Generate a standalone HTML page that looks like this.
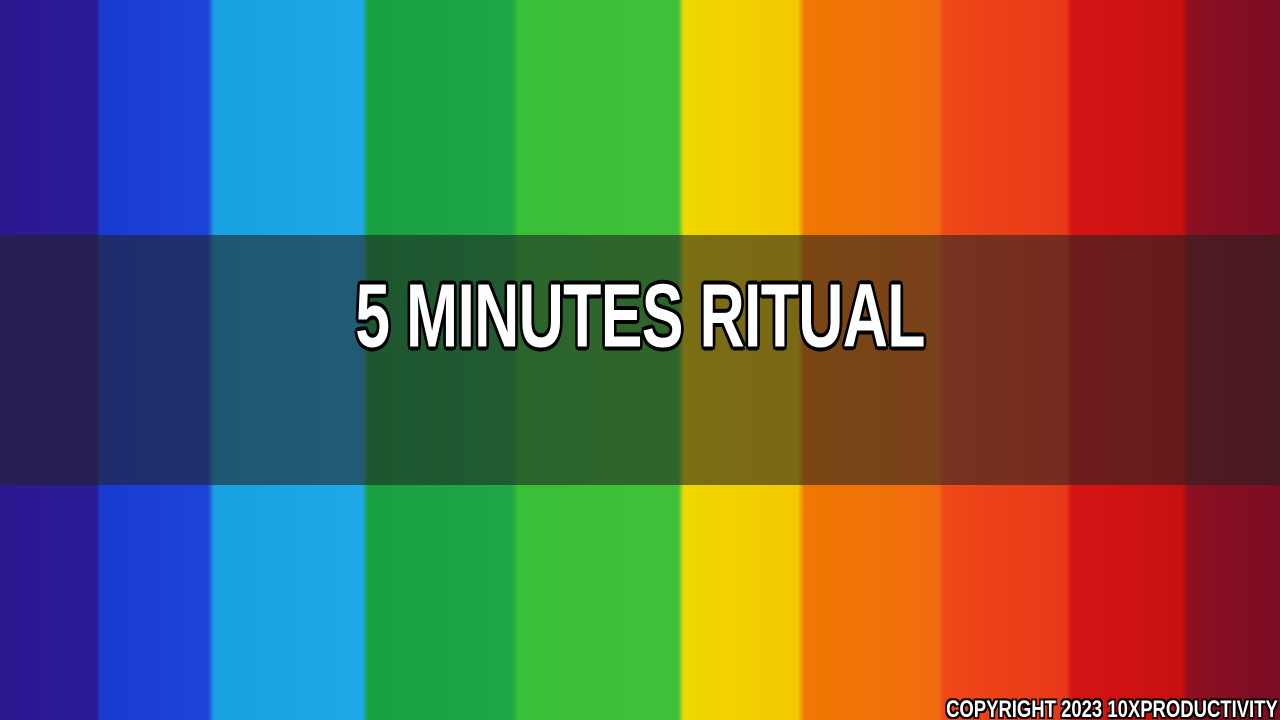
<!DOCTYPE html>
<html><head><style>
html,body{margin:0;padding:0;width:1280px;height:720px;overflow:hidden}
body{position:relative;background:linear-gradient(90deg,
#2a1890 0,#2a1c96 97px,#1a3ad2 100px,#1c44d8 208px,#18a0e0 214px,#20a8e8 362px,#18a040 368px,#20a848 512px,#38c038 518px,#40c038 678px,#f0d800 684px,#f4c800 798px,#f07800 804px,#f06c10 938px,#f04818 944px,#e83818 1066px,#d41414 1072px,#c81010 1182px,#8c1020 1188px,#7c0c24 1280px)}
.band{position:absolute;left:0;top:235px;width:1280px;height:250px;background:rgba(35,35,35,.58)}
.t{position:absolute;left:0;top:265px;width:1280px;text-align:center;font:bold 92px "Liberation Sans",sans-serif;color:#fff;
text-shadow:0 0 2px #000,3px 3px 0 #000,-3px -3px 0 #000,3px -3px 0 #000,-3px 3px 0 #000,4px 0 0 #000,-4px 0 0 #000,0 4px 0 #000,0 -4px 0 #000;transform:scale(0.68,0.98);transform-origin:center top;letter-spacing:-1px}
.c{position:absolute;right:2px;top:696px;font:bold 24px "Liberation Sans",sans-serif;color:#fff;text-shadow:2px 2px 0 #000,-2px -2px 0 #000,2px -2px 0 #000,-2px 2px 0 #000;transform:scaleX(0.77);transform-origin:right top;white-space:nowrap}
</style></head><body>
<div class="band"></div>
<div class="t">5 MINUTES RITUAL</div>
<div class="c">COPYRIGHT 2023 10XPRODUCTIVITY</div>
</body></html>
